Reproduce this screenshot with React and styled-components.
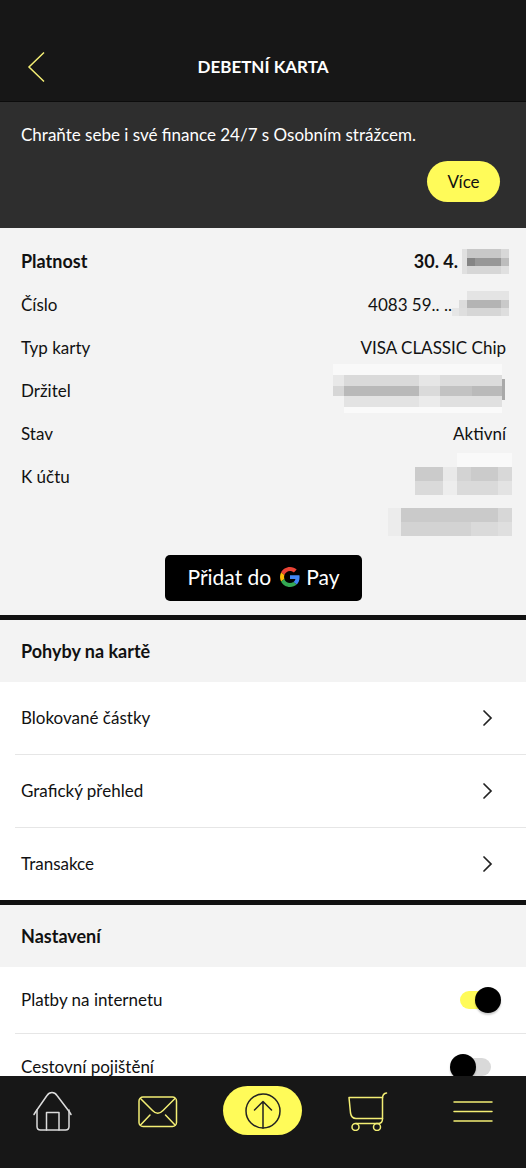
import React, { useState } from 'react';
import styled, { createGlobalStyle } from 'styled-components';

const GlobalStyle = createGlobalStyle`
    body{
        margin: 0;
        background: #171717;
    }
    *{
        box-sizing: border-box;
    }
    button, input{
        font: inherit;
    }
`;

const Screen = styled.div`
    height: 100vh;
    display: flex;
    flex-direction: column;
    font-family: Lato, "Open Sans", sans-serif;
    font-size: 17px;
    line-height: 24px;
    color: #111;
`;

const Header = styled.header`
    display: grid;
    grid-template-columns: 72px 1fr 72px;
    align-items: center;
    padding-top: 32px;
    height: 102px;
    flex-shrink: 0;
    background: #171717;
    border-bottom: 1px solid #0c0c0c;

    h1{
        margin: 0;
        font-size: 17px;
        font-weight: 700;
        text-align: center;
        color: #fff;
    }
`;

const BackButton = styled.button`
    display: flex;
    justify-content: center;
    padding: 0;
    border: 0;
    background: none;
    cursor: pointer;
`;

const Content = styled.main`
    flex: 1;
    min-height: 0;
    overflow-y: auto;
    scrollbar-width: none;
    background: #fff;
`;

const Banner = styled.section`
    display: flex;
    flex-direction: column;
    gap: 14px;
    padding: 21px 26px 26px 21px;
    background: #2e2e2e;
    color: #fff;

    p{
        margin: 0;
    }
`;

const MoreButton = styled.button`
    align-self: flex-end;
    width: 73px;
    height: 41px;
    padding: 0;
    border: 0;
    border-radius: 21px;
    background: #fffb59;
    color: #111;
    cursor: pointer;
`;

const Details = styled.section`
    padding: 12px 20px 14px 21px;
    background: #f3f3f3;
    text-align: center;

    dl{
        margin: 0;
    }
`;

const DetailRow = styled.div`
    display: flex;
    justify-content: space-between;
    line-height: 43px;
    font-size: ${({ $bold }) => ($bold ? 18 : 17)}px;
    font-weight: ${({ $bold }) => ($bold ? 700 : 400)};

    dd{
        margin: 0;
        display: flex;
        flex-direction: column;
        align-items: flex-end;
    }
`;

const Value = styled.span`
    display: flex;
    align-items: center;
    height: 43px;

    svg{
        overflow: visible;
    }
`;

const PayButton = styled.button`
    display: inline-flex;
    align-items: center;
    justify-content: center;
    gap: 9px;
    width: 197px;
    height: 46px;
    margin-top: 14px;
    padding: 0 0 2px;
    border: 0;
    border-radius: 5px;
    vertical-align: top;
    background: #000;
    color: #fff;
    font-size: 21px;
    cursor: pointer;
`;

const PayMark = styled.span`
    display: flex;
    align-items: center;
    gap: 6px;
`;

const Section = styled.section`
    border-top: 5px solid #111;

    h2{
        margin: 0;
        padding: 19px 21px;
        background: #f3f3f3;
        font-size: 18px;
        line-height: 24px;
        font-weight: 700;
    }
    ul{
        margin: 0;
        padding: 0 0 0 15px;
        list-style: none;
    }
    li + li{
        border-top: 1px solid #e6e6e6;
    }
`;

const LinkRow = styled.a`
    display: flex;
    align-items: center;
    justify-content: space-between;
    height: 72px;
    padding: 0 30px 0 6px;
    color: inherit;
    text-decoration: none;
`;

const SwitchRow = styled.label`
    display: flex;
    align-items: center;
    justify-content: space-between;
    height: 66px;
    padding: 0 25px 0 6px;
    cursor: pointer;
`;

const Switch = styled.input`
    appearance: none;
    display: grid;
    align-items: center;
    width: 51px;
    height: 26px;
    margin: 0;
    cursor: pointer;

    &::before, &::after{
        content: '';
        grid-area: 1 / 1;
    }
    &::before{
        height: 18px;
        margin: 0 10px;
        border-radius: 9px;
        background: #d9d9d9;
    }
    &::after{
        width: 26px;
        height: 26px;
        border-radius: 50%;
        background: #000;
        box-shadow: 0 2px 2px rgba(0, 0, 0, 0.2);
    }
    &:checked::before{
        background: #fffb59;
    }
    &:checked::after{
        justify-self: end;
    }
`;

const TabBar = styled.nav`
    display: grid;
    grid-template-columns: repeat(5, 1fr);
    justify-items: center;
    align-items: start;
    height: 92px;
    flex-shrink: 0;
    padding-top: 10px;
    background: #171717;
`;

const Tab = styled.button`
    display: flex;
    align-items: center;
    justify-content: center;
    width: 79px;
    height: 49px;
    padding: 0;
    border: 0;
    border-radius: 25px;
    background: ${({ $main }) => ($main ? '#fffb59' : 'none')};
    color: ${({ $color }) => $color || '#f3ee74'};
    cursor: pointer;

    svg{
        fill: none;
        stroke: currentColor;
        stroke-width: 1.5;
        stroke-linecap: round;
        stroke-linejoin: round;
    }
`;

// hidden values, each cell is [x, y, width, height, color]
const masks = {
    expiry: { width: 48, height: 26, cells: [
        [4, 0, 5, 25, '#e0e0e0'], [9, 0, 34, 9, '#c8c8c8'], [43, 0, 8, 9, '#d8d8d8'],
        [9, 9, 8, 8, '#858585'], [17, 9, 26, 8, '#979797'], [43, 9, 8, 8, '#bdbdbd'],
        [9, 17, 34, 8, '#d6d6d6'], [43, 17, 8, 8, '#e0e0e0'],
    ] },
    number: { width: 54, height: 26, cells: [
        [0, 16, 7, 8, '#e6e6e6'], [7, 8, 8, 8, '#dcdcdc'], [7, 16, 8, 8, '#dedede'],
        [15, -1, 42, 9, '#e4e4e4'], [15, 8, 34, 8, '#b4b4b4'], [49, 8, 8, 8, '#c9c9c9'],
        [15, 16, 34, 8, '#d6d6d6'], [49, 16, 8, 8, '#dedede'],
    ] },
    holder: { width: 173, height: 32, cells: [
        [0, -11, 169, 11, '#f9f9f9'], [11, 32, 158, 6, '#fafafa'],
        [0, 0, 11, 11, '#e8e8e8'], [0, 11, 11, 10, '#d6d6d6'],
        [11, 0, 75, 11, '#dadada'], [86, 0, 21, 11, '#e6e6e6'], [107, 0, 62, 11, '#dcdcdc'],
        [11, 11, 75, 10, '#b9b9b9'], [86, 11, 21, 10, '#dadada'], [107, 11, 32, 10, '#c2c2c2'],
        [139, 11, 30, 10, '#bababa'], [11, 21, 75, 11, '#e3e3e3'], [86, 21, 21, 11, '#ebebeb'],
        [107, 21, 62, 11, '#e0e0e0'], [169, 4, 3, 21, '#a9a9a9'],
    ] },
    account: { width: 91, height: 28, cells: [
        [42, -10, 55, 14, '#f9f9f9'],
        [0, 4, 28, 14, '#cbcbcb'], [28, 4, 14, 14, '#e9e9e9'], [42, 4, 14, 14, '#d3d3d3'],
        [56, 4, 27, 14, '#cbcbcb'], [83, 4, 14, 14, '#d8d8d8'], [0, 18, 28, 14, '#dadada'],
        [28, 18, 14, 14, '#ededed'], [42, 18, 41, 14, '#dadada'], [83, 18, 14, 14, '#e3e3e3'],
    ] },
    owner: { width: 118, height: 28, cells: [
        [0, 2, 13, 28, '#ececec'], [13, 2, 97, 14, '#cacaca'], [110, 2, 14, 14, '#d7d7d7'],
        [13, 16, 70, 14, '#d3d3d3'], [83, 16, 27, 14, '#dadada'], [110, 16, 14, 14, '#dfdfdf'],
    ] },
};

function Mask({ name }){
    const { width, height, cells } = masks[name];
    return (
        <svg width={width} height={height} shapeRendering="crispEdges" aria-hidden="true">
            {cells.map(([x, y, w, h, fill]) => (
                <rect key={`${x}-${y}`} x={x} y={y} width={w} height={h} fill={fill} />
            ))}
        </svg>
    );
}

function GoogleIcon(){
    return (
        <svg width="20" height="20" viewBox="0 0 48 48" aria-hidden="true">
            <path fill="#EA4335" d="M24 9.5c3.54 0 6.71 1.22 9.21 3.6l6.85-6.85C35.9 2.38 30.47 0 24 0 14.62 0 6.51 5.38 2.56 13.22l7.98 6.19C12.43 13.72 17.74 9.5 24 9.5z" />
            <path fill="#4285F4" d="M46.98 24.55c0-1.57-.15-3.09-.38-4.55H24v9.02h12.94c-.58 2.96-2.26 5.48-4.78 7.18l7.73 6c4.51-4.18 7.09-10.36 7.09-17.65z" />
            <path fill="#FBBC05" d="M10.53 28.59c-.48-1.45-.76-2.99-.76-4.59s.27-3.14.76-4.59l-7.98-6.19C.92 16.46 0 20.12 0 24c0 3.88.92 7.54 2.56 10.78l7.97-6.19z" />
            <path fill="#34A853" d="M24 48c6.48 0 11.93-2.13 15.89-5.81l-7.73-6c-2.15 1.45-4.92 2.3-8.16 2.3-6.26 0-11.57-4.22-13.47-9.91l-7.98 6.19C6.51 42.62 14.62 48 24 48z" />
        </svg>
    );
}

const links = ['Blokované částky', 'Grafický přehled', 'Transakce'];

const tabs = [
    { label: 'Domů', color: '#dcdcdc', icon: (
        <>
            <path d="M1 23.5 2.5 21 14 4.500Q16 1.500 19 1.500T24 4.500L36.500 21 38 23.500" />
            <path d="M4 19V35.500q0 3.500 3.500 3.500H32.500q3.500 0 3.500-3.500V19" />
            <path d="M13.500 39V21.500H26V39" />
        </>
    ) },
    { label: 'Zprávy', icon: (
        <>
            <rect x="1" y="6" width="37.500" height="29.500" rx="4" />
            <path d="M2.500 7.500 14.500 19.500Q19.750 25 25 19.500L37 7.500M2.500 34 12 24M37 34 27.500 24" />
        </>
    ) },
    { label: 'Platba', color: '#222', main: true, icon: (
        <>
            <circle cx="20" cy="20" r="17" />
            <path d="M20 37V10.500M11.500 19 20 10.500 28.500 19" />
        </>
    ) },
    { label: 'Obchod', icon: (
        <>
            <path d="M38.500 2Q34.500 2.500 34.500 7.500V28Q34.500 32.500 30 32.500H8" />
            <path d="M34.500 6.500H1L2.500 22Q3.500 27.500 8 27.500H34.500" />
            <circle cx="7.500" cy="36" r="3.500" />
            <circle cx="29" cy="36" r="3.500" />
        </>
    ) },
    { label: 'Menu', icon: <path d="M1 11H39M1 20.500H39M1 30H39" /> },
];

export default function App(){
    const [settings, setSettings] = useState([
        { name: 'Platby na internetu', on: true },
        { name: 'Cestovní pojištění', on: false },
    ]);

    const onToggle = (name) => {
        setSettings((prev) => prev.map((s) => (s.name === name ? { ...s, on: !s.on } : s)));
    }

    return (
        <Screen>
            <GlobalStyle />
            <Header>
                <BackButton aria-label="Zpět">
                    <svg width="18" height="32" fill="none" stroke="#f3ee74" strokeWidth="1.5">
                        <path d="M17 1.500 2 16 17 30.500" />
                    </svg>
                </BackButton>
                <h1>DEBETNÍ KARTA</h1>
            </Header>
            <Content>
                <Banner>
                    <p>Chraňte sebe i své finance 24/7 s Osobním strážcem.</p>
                    <MoreButton>Více</MoreButton>
                </Banner>
                <Details>
                    <dl>
                        <DetailRow $bold>
                            <dt>Platnost</dt>
                            <dd><Value>30. 4.<Mask name="expiry" /></Value></dd>
                        </DetailRow>
                        <DetailRow>
                            <dt>Číslo</dt>
                            <dd><Value>4083 59.. ..<Mask name="number" /></Value></dd>
                        </DetailRow>
                        <DetailRow>
                            <dt>Typ karty</dt>
                            <dd><Value>VISA CLASSIC Chip</Value></dd>
                        </DetailRow>
                        <DetailRow>
                            <dt>Držitel</dt>
                            <dd><Value><Mask name="holder" /></Value></dd>
                        </DetailRow>
                        <DetailRow>
                            <dt>Stav</dt>
                            <dd><Value>Aktivní</Value></dd>
                        </DetailRow>
                        <DetailRow>
                            <dt>K účtu</dt>
                            <dd>
                                <Value><Mask name="account" /></Value>
                                <Value><Mask name="owner" /></Value>
                            </dd>
                        </DetailRow>
                    </dl>
                    <PayButton>
                        Přidat do
                        <PayMark><GoogleIcon />Pay</PayMark>
                    </PayButton>
                </Details>
                <Section>
                    <h2>Pohyby na kartě</h2>
                    <ul>
                        {links.map((name) => (
                            <li key={name}>
                                <LinkRow href="#">
                                    {name}
                                    <svg width="14" height="18" fill="none" stroke="#222" strokeWidth="1.7" strokeLinecap="round">
                                        <path d="M2 2 9 9 2 16" />
                                    </svg>
                                </LinkRow>
                            </li>
                        ))}
                    </ul>
                </Section>
                <Section>
                    <h2>Nastavení</h2>
                    <ul>
                        {settings.map(({ name, on }) => (
                            <li key={name}>
                                <SwitchRow>
                                    {name}
                                    <Switch type="checkbox" checked={on} onChange={() => onToggle(name)} />
                                </SwitchRow>
                            </li>
                        ))}
                    </ul>
                </Section>
            </Content>
            <TabBar>
                {tabs.map(({ label, color, main, icon }) => (
                    <Tab key={label} $color={color} $main={main} aria-label={label}>
                        <svg width="40" height="40">{icon}</svg>
                    </Tab>
                ))}
            </TabBar>
        </Screen>
    );
}
